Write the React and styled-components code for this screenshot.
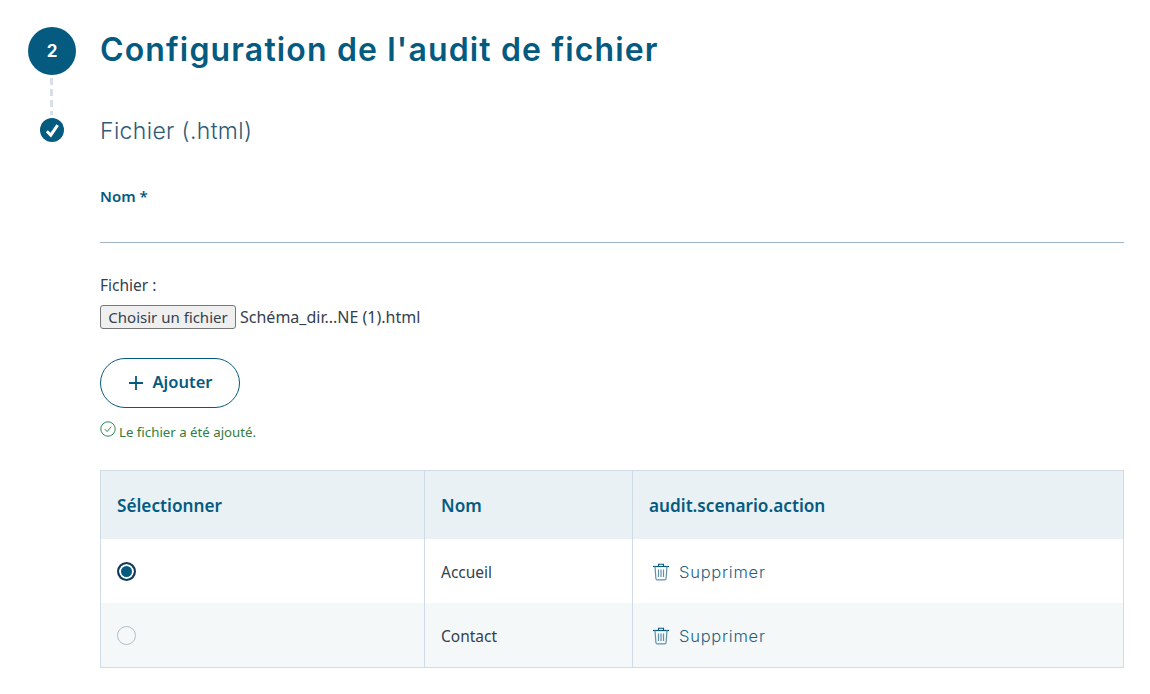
import { createGlobalStyle, styled } from "styled-components";

const GlobalStyle = createGlobalStyle`
  body {
    margin: 0;
    background: #fff;
    font-family: "Noto Sans", "Liberation Sans", sans-serif;
    color: #33414e;
  }
`;

const headingFont = `"Inter", "Noto Sans", sans-serif`;
const blue = "#055a80";

const rows = [
  { name: "Accueil", checked: true },
  { name: "Contact", checked: false },
];

const TrashIcon = () => (
  <svg width="18" height="19" viewBox="0 0 18 19" fill="none">
    <path d="M1 4.5h16" stroke="#0b5a7e" strokeWidth="1.2" />
    <path d="M6.5 4.5V2.2h5v2.3" stroke="#0b5a7e" strokeWidth="1.1" />
    <path d="M3 4.5l.9 12a1.5 1.5 0 0 0 1.5 1.4h7.2a1.5 1.5 0 0 0 1.5-1.4l.9-12" stroke="#5f90a8" strokeWidth="1.2" />
    <path d="M6.5 7.5v7.5M9 7.5v7.5M11.5 7.5v7.5" stroke="#5f90a8" strokeWidth="1.2" />
  </svg>
);

export default function App() {
  return (
    <Page>
      <GlobalStyle />
      <Header>
        <Rail>
          <StepCircle>2</StepCircle>
          <Dash />
          <CheckCircle>
            <svg width="24" height="24" viewBox="0 0 24 24" fill="none">
              <path d="M6.8 13.2l4 3.9 6.8-10" stroke="#fff" strokeWidth="3" />
            </svg>
          </CheckCircle>
        </Rail>
        <Headings>
          <Title>Configuration de l'audit de fichier</Title>
          <SubTitle>Fichier (.html)</SubTitle>
        </Headings>
      </Header>
      <Content>
        <FieldLabel>Nom *</FieldLabel>
        <FieldLine />
        <FileLabel>Fichier :</FileLabel>
        <FileRow>
          <FileButton>Choisir un fichier</FileButton>
          <span>Schéma_dir...NE (1).html</span>
        </FileRow>
        <AddButton>
          <svg width="16" height="16" viewBox="0 0 16 16" fill="none">
            <path d="M8 1v14M1 8h14" stroke={blue} strokeWidth="1.8" />
          </svg>
          <AddLabel>Ajouter</AddLabel>
        </AddButton>
        <Success>
          <svg width="16" height="16" viewBox="0 0 16 16" fill="none">
            <circle cx="8" cy="8" r="7.2" stroke="#2e8b57" strokeWidth="1" />
            <path d="M4.8 8.2l2.3 2.4 4.2-5" stroke="#2e8b57" strokeWidth="1" />
          </svg>
          <SuccessText>Le fichier a été ajouté.</SuccessText>
        </Success>
        <Table>
          <thead>
            <tr>
              <Th $width={324}>Sélectionner</Th>
              <Th $width={208}>Nom</Th>
              <Th>audit.scenario.action</Th>
            </tr>
          </thead>
          <tbody>
            {rows.map((row) => (
              <Row key={row.name}>
                <Td>
                  <Radio $checked={row.checked} />
                </Td>
                <Td>{row.name}</Td>
                <Td>
                  <DeleteAction>
                    <TrashIcon />
                    Supprimer
                  </DeleteAction>
                </Td>
              </Row>
            ))}
          </tbody>
        </Table>
      </Content>
    </Page>
  );
}

const Page = styled.div`
  padding: 27px 26px 26px 28px;
`;

const Header = styled.div`
  display: flex;
  gap: 24px;
`;

const Rail = styled.div`
  width: 48px;
  display: flex;
  flex-direction: column;
  align-items: center;
`;

const StepCircle = styled.div`
  width: 48px;
  height: 48px;
  border-radius: 50%;
  background: ${blue};
  color: #fff;
  display: flex;
  align-items: center;
  justify-content: center;
  font-family: ${headingFont};
  font-weight: 700;
  font-size: 17px;
`;

const Dash = styled.div`
  width: 3px;
  height: 37px;
  margin: 3px 1px 3px 0;
  background: repeating-linear-gradient(to bottom, #d9dfea 0 7px, transparent 7px 11px);
`;

const CheckCircle = styled.div`
  width: 24px;
  height: 24px;
  border-radius: 50%;
  background: ${blue};
`;

const Headings = styled.div`
  flex: 1;
`;

const Title = styled.h1`
  margin: 0;
  height: 46px;
  font-family: ${headingFont};
  font-weight: 600;
  font-size: 32px;
  line-height: 46px;
  color: ${blue};
  letter-spacing: 1.15px;
  white-space: nowrap;
`;

const SubTitle = styled.h2`
  margin: 44px 0 0;
  font-family: ${headingFont};
  font-weight: 300;
  font-size: 23px;
  line-height: 28px;
  letter-spacing: 0.35px;
  color: #2f5a78;
`;

const Content = styled.div`
  margin: 41px 0 0 72px;
  font-size: 16px;
`;

const FieldLabel = styled.div`
  font-weight: 600;
  font-size: 15px;
  line-height: 20px;
  color: ${blue};
`;

const FieldLine = styled.div`
  margin-top: 36px;
  border-bottom: 1px solid #9fb3c2;
`;

const FileLabel = styled.div`
  margin-top: 32px;
  line-height: 20px;
  font-size: 15.5px;
`;

const FileRow = styled.div`
  margin-top: 10px;
  display: flex;
  align-items: center;
  gap: 4px;
  height: 24px;
  font-size: 16px;
`;

const FileButton = styled.div`
  box-sizing: border-box;
  width: 136px;
  height: 24px;
  display: flex;
  align-items: center;
  justify-content: center;
  background: #efefef;
  border: 1px solid #767676;
  border-radius: 3px;
  font-size: 15px;
  white-space: nowrap;
`;

const AddButton = styled.button`
  margin-top: 29px;
  box-sizing: border-box;
  width: 140px;
  height: 50px;
  display: flex;
  align-items: center;
  justify-content: center;
  gap: 9px;
  background: #fff;
  border: 1px solid ${blue};
  border-radius: 25px;
  color: ${blue};
  font-family: "Noto Sans", sans-serif;
  font-weight: 600;
  font-size: 16.5px;
`;

const AddLabel = styled.span`
  margin-bottom: 3px;
`;

const Success = styled.div`
  margin-top: 13px;
  height: 20px;
  display: flex;
  align-items: flex-start;
  gap: 3px;
  color: #2f7d3f;
`;

const SuccessText = styled.span`
  margin-top: 3px;
  font-size: 13.25px;
  line-height: 16px;
`;

const Table = styled.table`
  margin-top: 29px;
  width: 100%;
  box-sizing: border-box;
  table-layout: fixed;
  border-collapse: collapse;
  border: 1px solid #cfdbe6;
`;

const Th = styled.th`
  width: ${(p) => (p.$width ? `${p.$width}px` : "auto")};
  height: 68px;
  padding: 2px 16px 0;
  box-sizing: border-box;
  text-align: left;
  background: #e9f1f5;
  border-left: 1px solid #cfdbe6;
  color: ${blue};
  font-weight: 600;
  font-size: 17.2px;
`;

const Row = styled.tr`
  height: 64px;
  &:nth-child(even) {
    height: 65px;
    background: #f4f8f9;
  }
`;

const Td = styled.td`
  padding: 2px 16px 0;
  border-left: 1px solid #cfdbe6;
  font-size: 15.5px;
  color: #33414e;
`;

const Radio = styled.span`
  display: block;
  box-sizing: border-box;
  width: 19px;
  height: 19px;
  border-radius: 50%;
  border: ${(p) => (p.$checked ? "2px solid #12395b" : "1px solid #aebfce")};
  background: ${(p) => (p.$checked ? blue : "transparent")};
  box-shadow: ${(p) => (p.$checked ? "inset 0 0 0 2px #fff" : "none")};
`;

const DeleteAction = styled.div`
  display: flex;
  align-items: center;
  gap: 9px;
  padding-left: 3px;
  font-family: ${headingFont};
  font-weight: 300;
  font-size: 16.5px;
  letter-spacing: 0.75px;
  color: #1f5f80;
`;
